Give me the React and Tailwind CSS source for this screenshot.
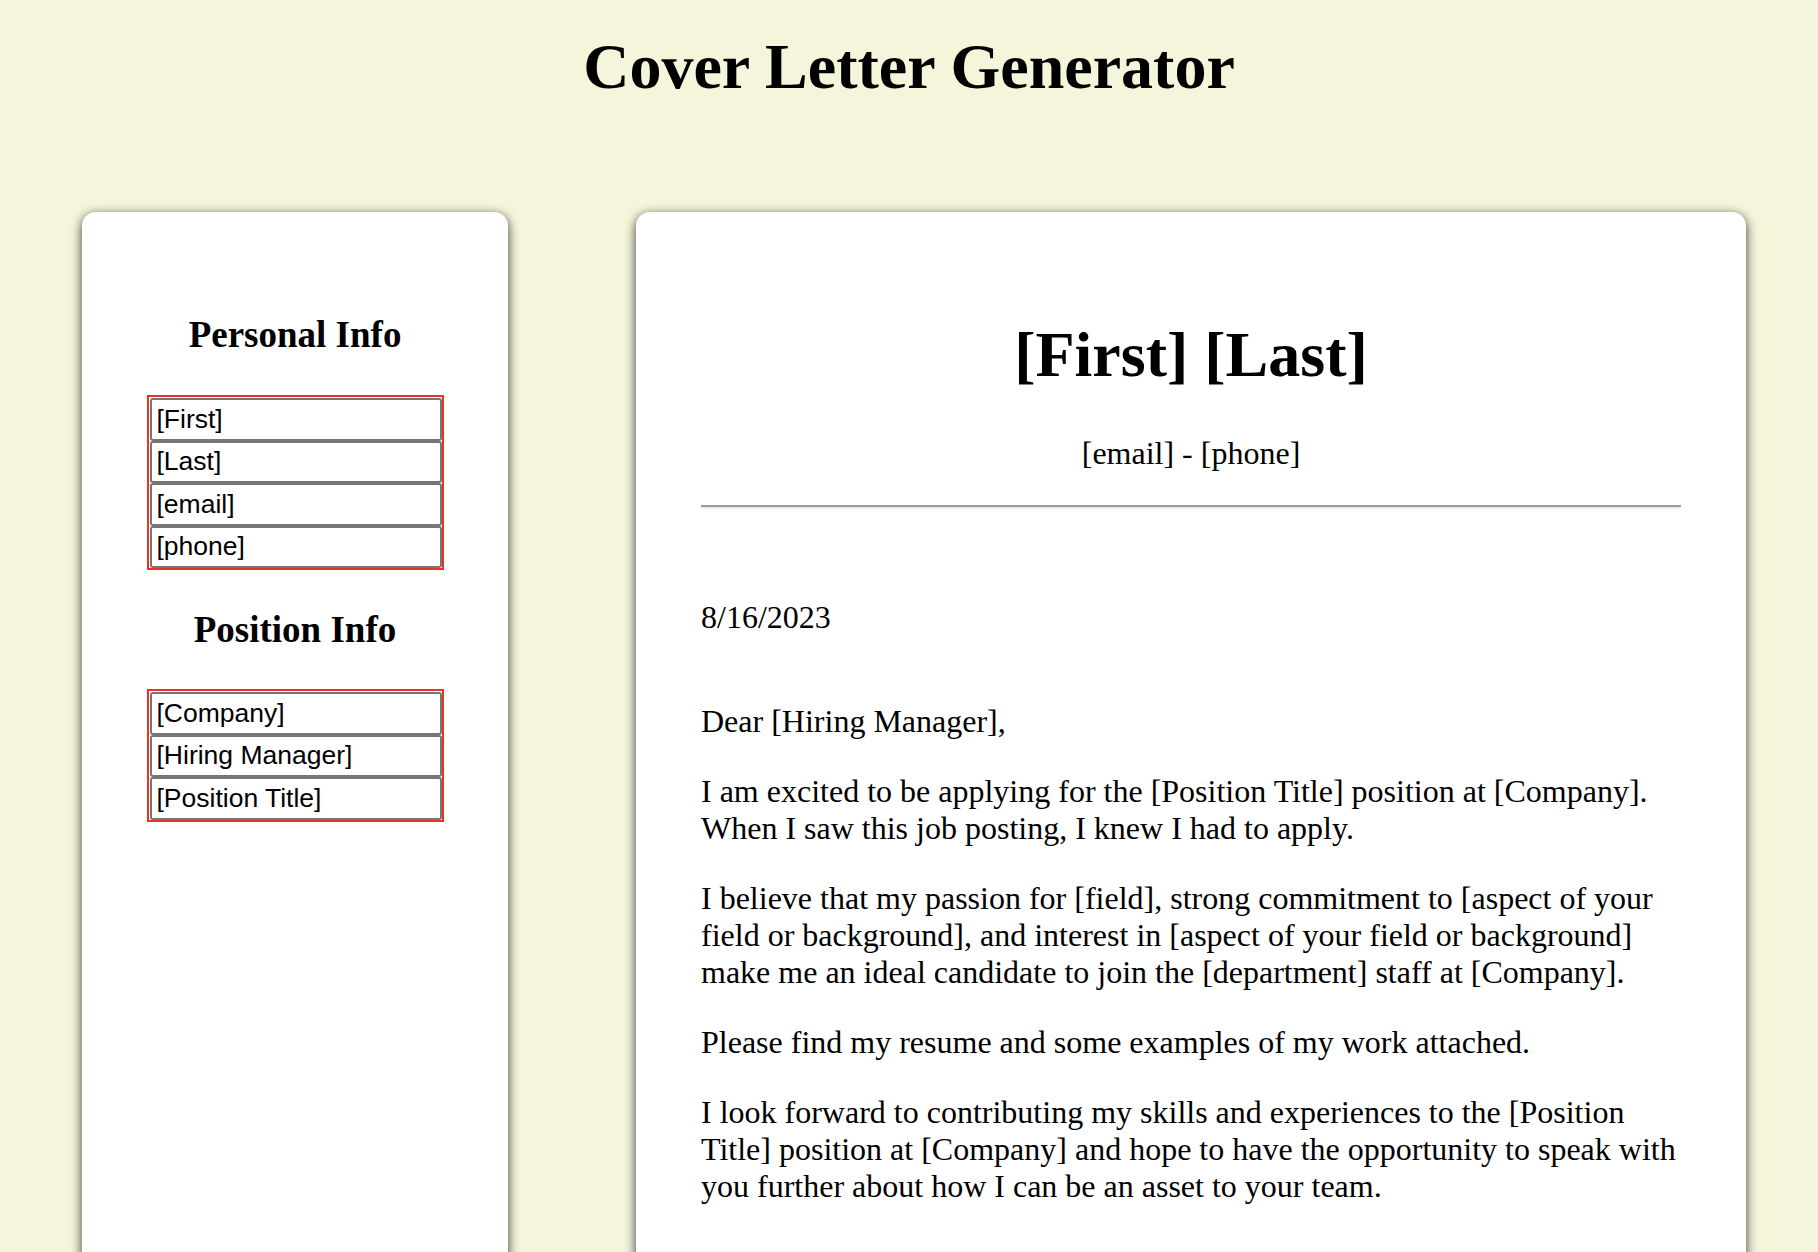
import { useState } from 'react';

const personalFields = [
  { key: 'first', label: '[First]' },
  { key: 'last', label: '[Last]' },
  { key: 'email', label: '[email]' },
  { key: 'phone', label: '[phone]' },
];

const positionFields = [
  { key: 'company', label: '[Company]' },
  { key: 'manager', label: '[Hiring Manager]' },
  { key: 'title', label: '[Position Title]' },
];

function FieldGroup({ fields, values, onChange }) {
  return (
    <div className="mx-auto w-[297px] border-2 border-[#ea3323] pl-px pt-px">
      {fields.map((field) => (
        <input
          key={field.key}
          value={values[field.key]}
          onChange={(e) => onChange(field.key, e.target.value)}
          className="block h-[42.5px] w-full rounded-[3px] border-2 border-[#767676] bg-white px-[5px] font-['Liberation_Sans',Arial,sans-serif] text-[26.5px] text-black outline-none"
        />
      ))}
    </div>
  );
}

function App() {
  const [info, setInfo] = useState({
    first: '[First]',
    last: '[Last]',
    email: '[email]',
    phone: '[phone]',
    company: '[Company]',
    manager: '[Hiring Manager]',
    title: '[Position Title]',
  });

  const update = (key, value) => setInfo((prev) => ({ ...prev, [key]: value }));

  return (
    <div className="min-h-screen bg-[#f5f5dc] font-['Liberation_Serif','Times_New_Roman',serif] text-black">
      <h1 className="pt-[30px] text-center text-[64px] font-bold leading-[74px]">Cover Letter Generator</h1>

      <div className="mt-[108px] flex items-stretch gap-[128px] pb-[40px] pl-[82px] pr-[72px]">
        <aside className="w-[426px] shrink-0 rounded-[14px] bg-white pt-[102px] shadow-[0_3px_11px_rgba(0,0,0,0.8)]">
          <h2 className="text-center text-[37px] font-bold leading-[42px]">Personal Info</h2>
          <div className="mt-[39px]">
            <FieldGroup fields={personalFields} values={info} onChange={update} />
          </div>
          <h2 className="mt-[39px] text-center text-[37px] font-bold leading-[42px]">Position Info</h2>
          <div className="mt-[38px]">
            <FieldGroup fields={positionFields} values={info} onChange={update} />
          </div>
        </aside>

        <main className="flex-1 rounded-[14px] bg-white px-[65px] pb-[120px] pt-[106px] shadow-[0_3px_11px_rgba(0,0,0,0.8)]">
          <h1 className="text-center text-[64px] font-bold leading-[74px]">
            {info.first} {info.last}
          </h1>
          <p className="mt-[43px] text-center text-[32px] leading-[37px]">
            {info.email} - {info.phone}
          </p>
          <hr className="mt-[33px] h-0 border-t-2 border-b-2 border-t-[#9a9a9a] border-b-[#ececec]" />

          <div className="text-[32px] leading-[37px]">
            <p className="mt-[90px]">8/16/2023</p>
            <p className="mt-[67px]">Dear {info.manager},</p>
            <p className="mt-[33px]">
              I am excited to be applying for the {info.title} position at {info.company}. When I saw this job posting, I knew I had to apply.
            </p>
            <p className="mt-[33px]">
              I believe that my passion for [field], strong commitment to [aspect of your field or background], and interest in [aspect of your field or background] make me an ideal candidate to join the [department] staff at {info.company}.
            </p>
            <p className="mt-[33px]">Please find my resume and some examples of my work attached.</p>
            <p className="mt-[33px]">
              I look forward to contributing my skills and experiences to the {info.title} position at {info.company} and hope to have the opportunity to speak with you further about how I can be an asset to your team.
            </p>
          </div>
        </main>
      </div>
    </div>
  );
}

export default App;
